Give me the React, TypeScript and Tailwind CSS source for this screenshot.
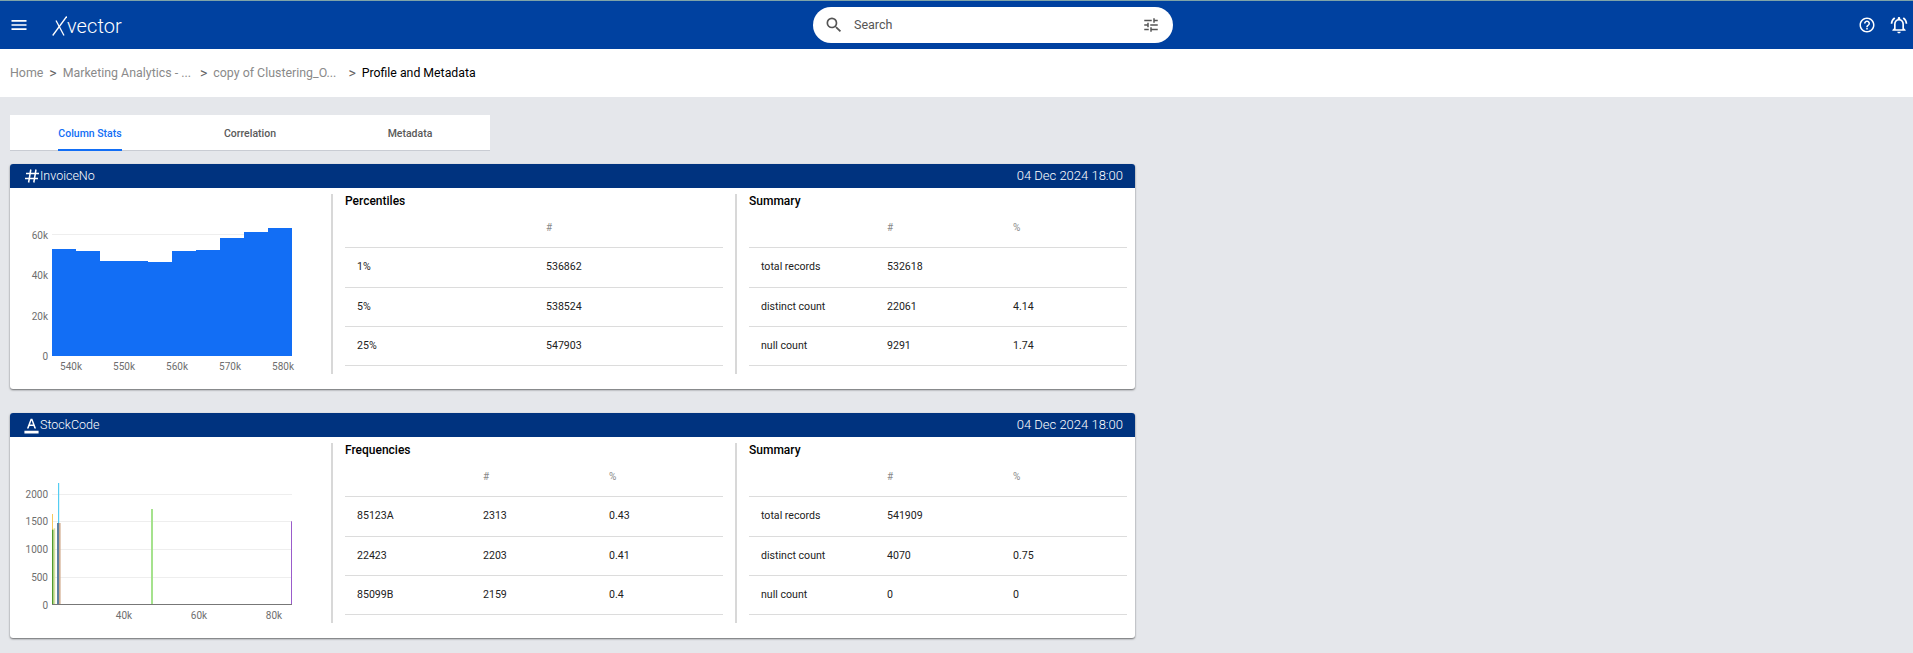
import React from "react";
import { MdMenu, MdSearch, MdTune, MdHelpOutline, MdOutlineNotificationsActive, MdFormatColorText } from "react-icons/md";

type TableProps = {
  title: string;
  widths: number[];
  head: string[];
  rows: string[][];
};

function StatTable({ title, widths, head, rows }: TableProps) {
  return (
    <div className="flex-1 min-w-0">
      <div className="h-[14px] text-[12px] leading-[14px] font-medium text-black">{title}</div>
      <table className="w-full table-fixed border-collapse text-[10.6px] text-[#222222]">
        <colgroup>
          {widths.map((w, i) => (
            <col key={i} style={{ width: w }} />
          ))}
          <col />
        </colgroup>
        <thead>
          <tr className="h-[39px] border-b border-[#dcdcdc]">
            {head.map((h, i) => (
              <th key={i} className="p-0 text-left font-normal text-[10px] text-[#8a8a8a]">
                {h}
              </th>
            ))}
          </tr>
        </thead>
        <tbody>
          {rows.map((r, i) => (
            <tr key={i} className={i === 0 ? "h-[40px] border-b border-[#dcdcdc]" : "h-[39px] border-b border-[#dcdcdc]"}>
              {r.map((c, j) => (
                <td key={j} className={j === 0 ? "p-0 pl-3" : "p-0"}>
                  {c}
                </td>
              ))}
            </tr>
          ))}
        </tbody>
      </table>
    </div>
  );
}

function Axis({ x, y, children, anchor = "end" }: { x: number; y: number; children: string; anchor?: "end" | "middle" }) {
  return (
    <text x={x} y={y} textAnchor={anchor} fontSize="10" fill="#6e6e6e" fontFamily="Roboto, sans-serif">
      {children}
    </text>
  );
}

function HistChart() {
  const tops = [249, 251, 261, 261, 262, 251, 250, 238, 232, 228];
  return (
    <svg width="321" height="201" viewBox="10 188 321 201" className="block shrink-0">
      <line x1="52" x2="292" y1="234.5" y2="234.5" stroke="#eeeeee" />
      {tops.map((t, i) => (
        <rect key={i} x={52 + i * 24} y={t} width="24" height={356 - t} fill="#126ef5" />
      ))}
      <Axis x={48} y={238.5}>60k</Axis>
      <Axis x={48} y={278.5}>40k</Axis>
      <Axis x={48} y={319.5}>20k</Axis>
      <Axis x={48} y={359.5}>0</Axis>
      {[["540k", 71], ["550k", 124], ["560k", 177], ["570k", 230], ["580k", 283]].map(([l, x]) => (
        <Axis key={l as string} x={x as number} y={369.5} anchor="middle">{l as string}</Axis>
      ))}
    </svg>
  );
}

function FreqChart() {
  const bars: [number, number, number, string][] = [
    [52, 1, 514, "#f5c95c"],
    [52, 1.6, 529.7, "#4f9a2c"],
    [53.6, 1.6, 528.3, "#d5e2a0"],
    [58, 1.2, 483, "#54cdf2"],
    [57, 2, 523, "#5c7f9e"],
    [59, 1.6, 523, "#d2ac8f"],
    [151, 2, 509, "#a5e28d"],
    [291, 1, 521.3, "#9a5ccb"],
  ];
  return (
    <svg width="321" height="201" viewBox="10 437 321 201" className="block shrink-0">
      {[494.5, 521.5, 549.5, 577.5].map((y) => (
        <line key={y} x1="52" x2="292" y1={y} y2={y} stroke="#eeeeee" />
      ))}
      {bars.map(([x, w, t, c], i) => (
        <rect key={i} x={x} y={t} width={w} height={604.5 - t} fill={c} />
      ))}
      <line x1="52" x2="292" y1="604.5" y2="604.5" stroke="#777777" />
      <Axis x={48} y={497.5}>2000</Axis>
      <Axis x={48} y={525}>1500</Axis>
      <Axis x={48} y={552.5}>1000</Axis>
      <Axis x={48} y={580.5}>500</Axis>
      <Axis x={48} y={608.5}>0</Axis>
      <Axis x={124} y={618.5} anchor="middle">40k</Axis>
      <Axis x={199} y={618.5} anchor="middle">60k</Axis>
      <Axis x={274} y={618.5} anchor="middle">80k</Axis>
    </svg>
  );
}

function HashIcon() {
  return (
    <svg width="14" height="14" viewBox="0 0 14 14" fill="none" stroke="white" strokeWidth="1.5">
      <line x1="5.8" y1="0.5" x2="3.6" y2="13.5" />
      <line x1="11" y1="0.5" x2="8.8" y2="13.5" />
      <line x1="1" y1="4.6" x2="14" y2="4.6" />
      <line x1="0" y1="9.4" x2="13" y2="9.4" />
    </svg>
  );
}

function Card({ icon, name, children }: { icon: React.ReactNode; name: string; children: React.ReactNode }) {
  return (
    <section className="w-[1125px] h-[225px] bg-white rounded-[3px] overflow-hidden shadow-[0_1px_2px_rgba(0,0,0,0.55)]">
      <div className="h-6 bg-[#00337f] flex items-center pl-[13px] pr-[12px] text-white">
        <span className="w-[17px] flex justify-center">{icon}</span>
        <span className="text-[12.5px] font-light">{name}</span>
        <span className="ml-auto text-[13px] font-light">04 Dec 2024 18:00</span>
      </div>
      <div className="flex">{children}</div>
    </section>
  );
}

function Sections({ chart, left, right }: { chart: React.ReactNode; left: TableProps; right: TableProps }) {
  return (
    <>
      {chart}
      <div className="flex-1 flex min-w-0 mt-[6px] h-[180px] pr-2">
        <div className="w-[2px] bg-[#d8d8d8] shrink-0" />
        <div className="w-[402px] shrink-0 flex px-3">
          <StatTable {...left} />
        </div>
        <div className="w-[2px] bg-[#d8d8d8] shrink-0" />
        <div className="flex-1 flex pl-3 min-w-0">
          <StatTable {...right} />
        </div>
      </div>
    </>
  );
}

export default function App() {
  return (
    <div className="min-h-[653px] bg-gray-200 [font-family:Roboto,sans-serif] overflow-hidden">
      <header className="h-[49px] bg-[#0041a0] border-t border-[#7fa3a8] flex items-center text-white relative">
        <MdMenu size={20} className="ml-[9px]" />
        <div className="ml-[23px] mt-[2px] flex items-baseline">
          <svg width="15" height="20" viewBox="0 0 15 20" fill="none" stroke="white" strokeWidth="1.3" aria-label="X" className="self-center">
            <line x1="0.7" y1="19.5" x2="14.7" y2="0.5" />
            <line x1="4" y1="4.5" x2="12" y2="19.5" />
          </svg>
          <span className="text-[20px] font-light leading-none tracking-[0.1px]">vector</span>
        </div>
        <div className="absolute left-[813px] top-[6px] w-[360px] h-9 rounded-full bg-white flex items-center text-[#555555]">
          <MdSearch size={20} className="ml-[11px]" />
          <span className="ml-[10px] text-[12.5px]">Search</span>
          <MdTune size={18} className="ml-auto mr-[13px]" />
        </div>
        <div className="ml-auto flex items-center gap-[13px] pr-[4px]">
          <MdHelpOutline size={18} />
          <MdOutlineNotificationsActive size={20} />
        </div>
      </header>

      <nav className="h-[48px] bg-white flex items-center pl-[10px] text-[12.4px] text-[#8a8a8a]">
        <span>Home</span>
        <span className="ml-[6px] text-[14px] text-[#666666]">&gt;</span>
        <span className="ml-[6px]">Marketing Analytics - ...</span>
        <span className="ml-[9px] text-[14px] text-[#666666]">&gt;</span>
        <span className="ml-[6px]">copy of Clustering_O...</span>
        <span className="ml-[12px] text-[14px] text-[#666666]">&gt;</span>
        <span className="ml-[6px] text-[12.3px] text-black">Profile and Metadata</span>
      </nav>

      <main className="pl-[10px] pt-[18px]">
        <div className="w-[480px] h-[36px] bg-white flex border-b border-[#c9ccd3] text-[10.5px] font-medium text-[#5a5a5a]">
          <div className="flex-1 flex justify-center">
            <div className="w-16 h-9 pt-[3px] border-b-2 border-[#126ef5] text-[#126ef5] flex items-center justify-center">Column Stats</div>
          </div>
          <div className="flex-1 pt-[3px] flex items-center justify-center">Correlation</div>
          <div className="flex-1 pt-[3px] flex items-center justify-center">Metadata</div>
        </div>

        <div className="mt-[13px] flex flex-col gap-[24px]">
          <Card icon={<HashIcon />} name="InvoiceNo">
            <Sections
              chart={<HistChart />}
              left={{
                title: "Percentiles",
                widths: [201],
                head: ["", "#"],
                rows: [["1%", "536862"], ["5%", "538524"], ["25%", "547903"]],
              }}
              right={{
                title: "Summary",
                widths: [138, 126],
                head: ["", "#", "%"],
                rows: [["total records", "532618", ""], ["distinct count", "22061", "4.14"], ["null count", "9291", "1.74"]],
              }}
            />
          </Card>
          <Card icon={<MdFormatColorText size={20} />} name="StockCode">
            <Sections
              chart={<FreqChart />}
              left={{
                title: "Frequencies",
                widths: [138, 126],
                head: ["", "#", "%"],
                rows: [["85123A", "2313", "0.43"], ["22423", "2203", "0.41"], ["85099B", "2159", "0.4"]],
              }}
              right={{
                title: "Summary",
                widths: [138, 126],
                head: ["", "#", "%"],
                rows: [["total records", "541909", ""], ["distinct count", "4070", "0.75"], ["null count", "0", "0"]],
              }}
            />
          </Card>
        </div>
      </main>
    </div>
  );
}
